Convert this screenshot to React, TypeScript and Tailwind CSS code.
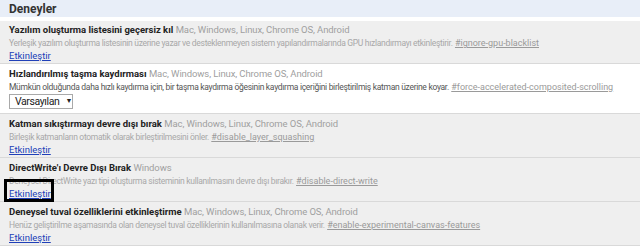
import React from "react";

const PLAT = "Mac, Windows, Linux, Chrome OS, Android";
const FONT = 'Roboto, "Noto Sans", sans-serif';

function Section({
  title,
  platforms,
  desc,
  hash,
  white,
  first,
  children,
}: {
  title: string;
  platforms: string;
  desc: string;
  hash: string;
  white?: boolean;
  first?: boolean;
  children: React.ReactNode;
}) {
  return (
    <div
      className={`border-b border-[#d9d9d9] pl-[9px] pb-[1px] ${first ? "pt-[2px]" : "pt-[3px]"} ${
        white ? "bg-white" : "bg-[#efefef]"
      }`}
    >
      <div className="h-[13px] leading-[13px] whitespace-nowrap">
        <span className="font-bold text-[#222]">{title}</span>{" "}
        <span className="text-[#a0a0a0] tracking-[-0.1px]">{platforms}</span>
      </div>
      <div className="h-[13px] leading-[13px] whitespace-nowrap">
        <span
          className={`text-[8.5px] tracking-[-0.3px] ${
            white ? "text-[#555]" : "text-[#a8a8a8]"
          }`}
        >
          {desc}
        </span>{" "}
        <span className="text-[9px] underline text-[#9a9a9a]">{hash}</span>
      </div>
      {children}
    </div>
  );
}

function Link({ focused }: { focused?: boolean }) {
  return (
    <div className="h-[13px] leading-[13px]">
      <span className="relative underline text-[#2040b8]">
        Etkinleştir
        {focused && (
          <span className="absolute left-[-5px] right-[-3px] top-[-9px] bottom-[-3px] border-[3px] border-black" />
        )}
      </span>
    </div>
  );
}

export default function App() {
  return (
    <div
      className="w-[640px] h-[247px] bg-white overflow-hidden text-[9.5px]"
      style={{ fontFamily: FONT }}
    >
      <div className="h-[17px] bg-[#e8eef8] pl-[9px] flex items-center">
        <span className="font-bold text-[12px] text-[#333]">Deneyler</span>
      </div>
      <div className="h-[4px] bg-white" />
      <Section
        first
        title="Yazılım oluşturma listesini geçersiz kıl"
        platforms={PLAT}
        desc="Yerleşik yazılım oluşturma listesinin üzerine yazar ve desteklenmeyen sistem yapılandırmalarında GPU hızlandırmayı etkinleştirir."
        hash="#ignore-gpu-blacklist"
      >
        <Link />
      </Section>
      <Section
        white
        title="Hızlandırılmış taşma kaydırması"
        platforms={PLAT}
        desc="Mümkün olduğunda daha hızlı kaydırma için, bir taşma kaydırma öğesinin kaydırma içeriğini birleştirilmiş katman üzerine koyar."
        hash="#force-accelerated-composited-scrolling"
      >
        <div className="pt-[1px] pb-[3px]">
          <div className="flex w-[64px] items-center h-[15px] border border-[#a9a9a9] bg-white pl-[5px] text-[10.5px] tracking-[-0.4px] text-[#222]">
            <span className="leading-[13px]">Varsayılan</span>
            <span className="ml-[6px] text-[7px] leading-none tracking-normal">▼</span>
          </div>
        </div>
      </Section>
      <Section
        title="Katman sıkıştırmayı devre dışı bırak"
        platforms={PLAT}
        desc="Birleşik katmanların otomatik olarak birleştirilmesini önler."
        hash="#disable_layer_squashing"
      >
        <Link />
      </Section>
      <Section
        title="DirectWrite'ı Devre Dışı Bırak"
        platforms="Windows"
        desc="Deneysel DirectWrite yazı tipi oluşturma sisteminin kullanılmasını devre dışı bırakır."
        hash="#disable-direct-write"
      >
        <Link focused />
      </Section>
      <Section
        title="Deneysel tuval özelliklerini etkinleştirme"
        platforms={PLAT}
        desc="Henüz geliştirilme aşamasında olan deneysel tuval özelliklerinin kullanılmasına olanak verir."
        hash="#enable-experimental-canvas-features"
      >
        <Link />
      </Section>
    </div>
  );
}
